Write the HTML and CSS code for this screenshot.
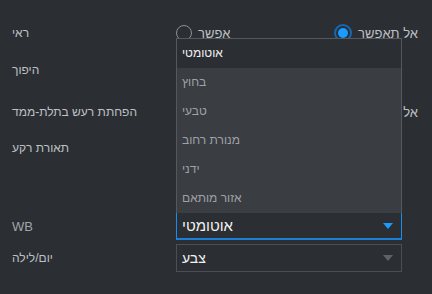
FILE: index.html
```html
<!DOCTYPE html>
<html lang="he">
<head>
  <meta charset="UTF-8">
  <title>הגדרות תמונה</title>
  <link rel="stylesheet" href="styles.css">
</head>
<body>

  <div class="settings">

    <div class="row row-mirror">
      <div class="label">ראי</div>
      <div class="radios">
        <label class="radio"><span class="dot"></span>אפשר</label>
        <label class="radio"><span class="dot on"></span>אל תאפשר</label>
      </div>
    </div>

    <!-- השדות שמתחת לרשימה הפתוחה מוסתרים -->
    <div class="row row-flip">
      <div class="label">היפוך</div>
      <div class="select"><span></span><span class="arrow"></span></div>
    </div>

    <div class="row row-noise">
      <div class="label">הפחתת רעש בתלת-ממד</div>
      <div class="radios">
        <label class="radio"><span class="dot"></span></label>
        <label class="radio"><span class="dot on"></span>אל תאפשר</label>
      </div>
    </div>

    <div class="row row-back">
      <div class="label">תאורת רקע</div>
      <div class="select"><span></span><span class="arrow"></span></div>
    </div>

    <div class="row row-wb">
      <div class="label dim">WB</div>
      <div class="select open">
        <span>אוטומטי</span><span class="arrow"></span>
        <ul class="menu">
          <li class="current">אוטומטי</li>
          <li>בחוץ</li>
          <li>טבעי</li>
          <li>מנורת רחוב</li>
          <li>ידני</li>
          <li>אזור מותאם</li>
        </ul>
      </div>
    </div>

    <div class="row row-day">
      <div class="label">יום/לילה</div>
      <div class="select"><span>צבע</span><span class="arrow"></span></div>
    </div>

  </div>

</body>
</html>
```

FILE: styles.css
```css
body {
  margin: 0;
  background: #2b2e33;
  font-family: "Liberation Sans", "DejaVu Sans", sans-serif;
  font-size: 12px;
  color: #bec0c3;
}

.settings {
  display: flex;
  flex-direction: column;
  padding-top: 15px;
}

.row {
  display: flex;
  align-items: center;
  padding-left: 12px;
}

.row-mirror { height: 36px; }
.row-flip { height: 38px; }
.row-noise { height: 46px; }
.row-back { height: 26px; margin-bottom: 51px; }
.row-wb { height: 28px; margin-bottom: 4px; }
.row-day { height: 28px; }

.label {
  width: 164px;
  flex-shrink: 0;
}

.label.dim {
  color: #a3a5a9;
  font-size: 13px;
}

.radios {
  display: flex;
  justify-content: space-between;
  width: 242px;
  font-size: 13px;
}

.radio {
  display: flex;
  align-items: center;
  gap: 6px;
}

.dot {
  width: 14px;
  height: 14px;
  border: 1.5px solid #8d9094;
  border-radius: 50%;
  box-sizing: content-box;
}

.dot.on {
  position: relative;
  border: 2px solid #1469b0;
  width: 14px;
  height: 14px;
}

.dot.on::after {
  content: "";
  position: absolute;
  left: 2px;
  top: 2px;
  width: 10px;
  height: 10px;
  border-radius: 50%;
  background: #1a9bff;
}

.select {
  position: relative;
  display: flex;
  align-items: center;
  justify-content: space-between;
  width: 226px;
  height: 28px;
  box-sizing: border-box;
  border: 1px solid #4b4e53;
  padding: 0 8px 0 5px;
  font-size: 14px;
  color: #f2f2f2;
}

.arrow {
  width: 0;
  height: 0;
  border-left: 5px solid transparent;
  border-right: 5px solid transparent;
  border-top: 6px solid #5f6267;
}

.select.open {
  border-color: #1a8cf0;
  border-top-color: transparent;
  border-bottom: 2px solid #1a7fd6;
  font-size: 15px;
}

.select.open .arrow {
  border-top-color: #1a9bff;
}

.menu {
  position: absolute;
  left: -1px;
  bottom: 100%;
  width: 226px;
  margin: 0;
  padding: 0;
  list-style: none;
  box-sizing: border-box;
  border: 1px solid #55585d;
  border-bottom: none;
  background: #3a3d42;
  font-size: 12px;
}

.menu li {
  height: 29px;
  line-height: 29px;
  padding-left: 5px;
  color: #9fa1a5;
}

.menu li.current {
  background: #2b2e33;
  color: #f2f2f2;
}
```
